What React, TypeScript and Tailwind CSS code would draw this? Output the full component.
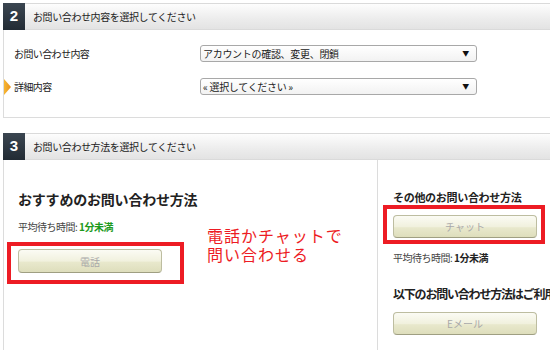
import React from "react";

const Header = ({ num, title }: { num: string; title: string }) => (
  <div className="flex h-[27px]">
    <div className="w-[22px] shrink-0 flex items-center justify-center bg-[linear-gradient(#3b4651,#222b34)] text-white text-[15px] font-bold font-['Liberation_Sans',sans-serif]">
      {num}
    </div>
    <div className="flex-1 flex items-center pl-[8px] bg-[linear-gradient(#fdfdfd,#ececec_60%,#e3e3e3)] border-t border-b border-[#dadada] text-[10px] tracking-[-0.4px] text-[#222]">
      {title}
    </div>
  </div>
);

const Select = ({ text }: { text: string }) => (
  <div className="w-[277px] h-[17px] rounded-[3px] border border-[#a8a8a8] bg-[linear-gradient(#ffffff,#f2f2f2)] flex items-center pl-[2px] pr-[7px] text-[10px] tracking-[-0.3px] text-[#222]">
    <span className="flex-1">{text}</span>
    <span className="text-[7px] text-[#111]">▼</span>
  </div>
);

const Btn = ({ label, h = 24 }: { label: string; h?: number }) => (
  <div
    className="w-[144px] rounded-[4px] border border-[#bdbda0] border-b-[#9f9f82] bg-[linear-gradient(#fbfbf4,#f1f1de_50%,#e8e8cc_56%,#dedebc)] flex items-center justify-center text-[10px] text-[#a9a9a9]"
    style={{ height: h }}
  >
    {label}
  </div>
);

export default function App() {
  return (
    <div className="w-[550px] h-[350px] overflow-hidden bg-white pt-[3px] pl-[3px] font-['Noto_Sans_CJK_JP',sans-serif] text-[#222]">
      <div className="w-[620px]">
        <Header num="2" title="お問い合わせ内容を選択してください" />
        <div className="h-[88px] border-l border-b border-[#dcdcdc] pt-[15px] flex flex-col gap-[16px]">
          <div className="flex items-center h-[17px]">
            <div className="w-[10px]" />
            <div className="w-[186px] text-[10px] tracking-[-0.6px]">お問い合わせ内容</div>
            <Select text="アカウントの確認、変更、閉鎖" />
          </div>
          <div className="flex items-center h-[17px]">
            <div className="w-[10px] flex">
              <svg width="7" height="16" viewBox="0 0 7 16">
                <defs>
                  <linearGradient id="og" x1="0" y1="0" x2="1" y2="0">
                    <stop offset="0" stopColor="#f7b733" />
                    <stop offset="1" stopColor="#e8901c" />
                  </linearGradient>
                </defs>
                <polygon points="0,0 7,8 0,16" fill="url(#og)" />
              </svg>
            </div>
            <div className="w-[186px] text-[10px] tracking-[-0.6px]">詳細内容</div>
            <Select text="« 選択してください »" />
          </div>
        </div>

        <div className="mt-[15px]">
          <Header num="3" title="お問い合わせ方法を選択してください" />
        </div>
        <div className="flex h-[200px] border-l border-[#dcdcdc]">
          <div className="relative w-[374px] shrink-0 border-r border-[#dcdcdc] pt-[29px] pl-[14px]">
            <div className="text-[14px] leading-[20px] font-bold tracking-[-0.2px] text-[#222]">
              おすすめのお問い合わせ方法
            </div>
            <div className="mt-[11px] text-[10px] leading-[14px] tracking-[-0.5px] text-[#444]">
              平均待ち時間: <span className="font-bold text-[#1c9a1c]">1分未満</span>
            </div>
            <div className="relative w-fit mt-[15px]">
              <Btn label="電話" h={24} />
              <div className="absolute left-[-11px] top-[-7px] w-[177px] h-[42px] border-[4px] border-[#ed1c24]" />
            </div>
            <div className="absolute left-[203px] top-[66px] text-[16px] leading-[19px] tracking-[1px] text-[#ed1c24] whitespace-nowrap">
              <div>電話かチャットで</div>
              <div>問い合わせる</div>
            </div>
          </div>
          <div className="flex-1 min-w-0 pl-[15px] pt-[29px]">
            <div className="text-[11px] leading-[16px] font-bold tracking-[-0.3px] text-[#222]">
              その他のお問い合わせ方法
            </div>
            <div className="relative w-fit mt-[10px]">
              <Btn label="チャット" h={23} />
              <div className="absolute left-[-10px] top-[-10px] w-[162px] h-[39px] border-[4px] border-[#ed1c24]" />
            </div>
            <div className="mt-[13px] text-[10px] leading-[14px] tracking-[-0.5px] text-[#444]">
              平均待ち時間: <span className="font-bold text-[#222]">1分未満</span>
            </div>
            <div className="mt-[20px] text-[12px] leading-[18px] font-bold tracking-[-1.2px] whitespace-nowrap text-[#222]">
              以下のお問い合わせ方法はご利用いただけません
            </div>
            <div className="mt-[9px]">
              <Btn label="Eメール" h={23} />
            </div>
          </div>
        </div>
      </div>
    </div>
  );
}
